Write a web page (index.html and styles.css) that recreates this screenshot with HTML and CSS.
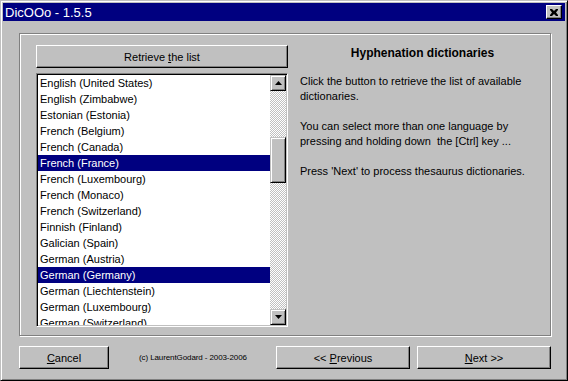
FILE: index.html
```html
<!DOCTYPE html>
<html lang="en">
  <head>
    <meta charset="UTF-8" />
    <title>DicOOo - 1.5.5</title>
    <link rel="stylesheet" href="styles.css">
  </head>
  <body>
    <div class="window">
      <div class="title-bar">
        <span class="title-text">DicOOo - 1.5.5</span>
        <button class="close-btn" aria-label="Close">
          <svg width="8" height="7" viewBox="0 0 8 7">
            <path d="M0 0h2l2 2 2-2h2v1l-2 2.5 2 2.5v1h-2l-2-2-2 2h-2v-1l2-2.5-2-2.5z" fill="#000" />
          </svg>
        </button>
      </div>

      <div class="content">
        <div class="group">
          <div class="left-col">
            <button class="btn retrieve-btn">Retrieve <u>t</u>he list</button>
            <div class="listbox">
              <div class="list-items">
                <div class="list-item">English (United States)</div>
                <div class="list-item">English (Zimbabwe)</div>
                <div class="list-item">Estonian (Estonia)</div>
                <div class="list-item">French (Belgium)</div>
                <div class="list-item">French (Canada)</div>
                <div class="list-item selected">French (France)</div>
                <div class="list-item">French (Luxembourg)</div>
                <div class="list-item">French (Monaco)</div>
                <div class="list-item">French (Switzerland)</div>
                <div class="list-item">Finnish (Finland)</div>
                <div class="list-item">Galician (Spain)</div>
                <div class="list-item">German (Austria)</div>
                <div class="list-item selected">German (Germany)</div>
                <div class="list-item">German (Liechtenstein)</div>
                <div class="list-item">German (Luxembourg)</div>
                <div class="list-item">German (Switzerland)</div>
              </div>
              <div class="scrollbar">
                <div class="scroll-btn">
                  <svg width="7" height="4" viewBox="0 0 7 4"><path d="M3.5 0L7 4H0z" fill="#000" /></svg>
                </div>
                <div class="scroll-track">
                  <div class="scroll-thumb"></div>
                </div>
                <div class="scroll-btn">
                  <svg width="7" height="4" viewBox="0 0 7 4"><path d="M0 0h7L3.5 4z" fill="#000" /></svg>
                </div>
              </div>
            </div>
          </div>

          <div class="right-col">
            <h2 class="heading">Hyphenation dictionaries</h2>
            <p>Click the button to retrieve the list of available dictionaries.</p>
            <p>You can select more than one language by pressing and holding down&nbsp; the [Ctrl] key ...</p>
            <p>Press 'Next' to process thesaurus dictionaries.</p>
          </div>
        </div>

        <div class="bottom-row">
          <button class="btn cancel-btn"><u>C</u>ancel</button>
          <span class="copyright">(c) LaurentGodard - 2003-2006</span>
          <button class="btn nav-btn prev-btn">&lt;&lt; <u>P</u>revious</button>
          <button class="btn nav-btn"><u>N</u>ext &gt;&gt;</button>
        </div>
      </div>
    </div>
  </body>
</html>
```

FILE: styles.css
```css
body {
  margin: 0;
  font-family: "Liberation Sans", Arial, sans-serif;
  font-size: 11px;
  color: #000;
  background: #c0c0c0;
}

.window {
  width: 568px;
  height: 381px;
  box-sizing: border-box;
  border: 1px solid;
  border-color: #c0c0c0 #000 #000 #c0c0c0;
  box-shadow: inset 1px 1px 0 #fff, inset -1px -1px 0 #808080;
  padding: 2px;
  background: #c0c0c0;
  display: flex;
  flex-direction: column;
}

.title-bar {
  height: 18px;
  background: #000080;
  color: #fff;
  display: flex;
  align-items: center;
  justify-content: space-between;
  padding: 0 3px 0 2px;
}

.title-text {
  font-size: 13px;
}

.close-btn {
  width: 16px;
  height: 14px;
  padding: 0;
  box-sizing: border-box;
  background: #c0c0c0;
  border: 1px solid;
  border-color: #fff #000 #000 #fff;
  box-shadow: inset -1px -1px 0 #808080;
  display: flex;
  align-items: center;
  justify-content: center;
}

.content {
  padding: 12px 14px 0 16px;
}

.group {
  height: 303px;
  box-sizing: border-box;
  border: 1px solid #808080;
  box-shadow: inset 1px 1px 0 #fff, 1px 1px 0 #fff;
  display: flex;
  padding: 11px 5px 0 16px;
}

.left-col {
  width: 252px;
  display: flex;
  flex-direction: column;
  gap: 5px;
}

.btn {
  font-family: "Liberation Sans", Arial, sans-serif;
  font-size: 11px;
  color: #000;
  background: #c0c0c0;
  border: 1px solid;
  border-color: #fff #000 #000 #fff;
  box-shadow: inset -1px -1px 0 #808080;
  height: 23px;
  padding: 0;
}

.retrieve-btn {
  width: 252px;
}

.listbox {
  height: 254px;
  box-sizing: border-box;
  border: 1px solid;
  border-color: #808080 #fff #fff #808080;
  box-shadow: inset 1px 1px 0 #000, inset -1px -1px 0 #c0c0c0;
  padding: 1px;
  display: flex;
  background: #fff;
}

.list-items {
  flex: 1;
  overflow: hidden;
  margin: 0;
}

.list-item {
  height: 16px;
  line-height: 16px;
  padding-left: 2px;
  white-space: nowrap;
}

.list-item.selected {
  background: #000080;
  color: #fff;
}

.scrollbar {
  width: 16px;
  display: flex;
  flex-direction: column;
}

.scroll-btn,
.scroll-thumb {
  height: 16px;
  box-sizing: border-box;
  background: #c0c0c0;
  border: 1px solid;
  border-color: #c0c0c0 #000 #000 #c0c0c0;
  box-shadow: inset 1px 1px 0 #fff, inset -1px -1px 0 #808080;
  display: flex;
  align-items: center;
  justify-content: center;
}

.scroll-track {
  flex: 1;
  background: conic-gradient(#fff 25%, #c0c0c0 0 50%, #fff 0 75%, #c0c0c0 0);
  background-size: 2px 2px;
}

.scroll-thumb {
  height: 46px;
  margin-top: 46px;
}

.right-col {
  flex: 1;
  margin-left: 12px;
}

.heading {
  font-size: 12px;
  font-weight: bold;
  text-align: center;
  margin: 1px 0 13px;
  line-height: 15px;
}

.right-col p {
  margin: 0 0 15px;
  line-height: 15px;
}

.bottom-row {
  display: flex;
  align-items: center;
  margin-top: 10px;
}

.cancel-btn {
  width: 90px;
}

.copyright {
  font-size: 8px;
  margin-left: 30px;
  letter-spacing: -0.1px;
}

.nav-btn {
  width: 134px;
}

.prev-btn {
  margin-left: auto;
  margin-right: 7px;
}
```
